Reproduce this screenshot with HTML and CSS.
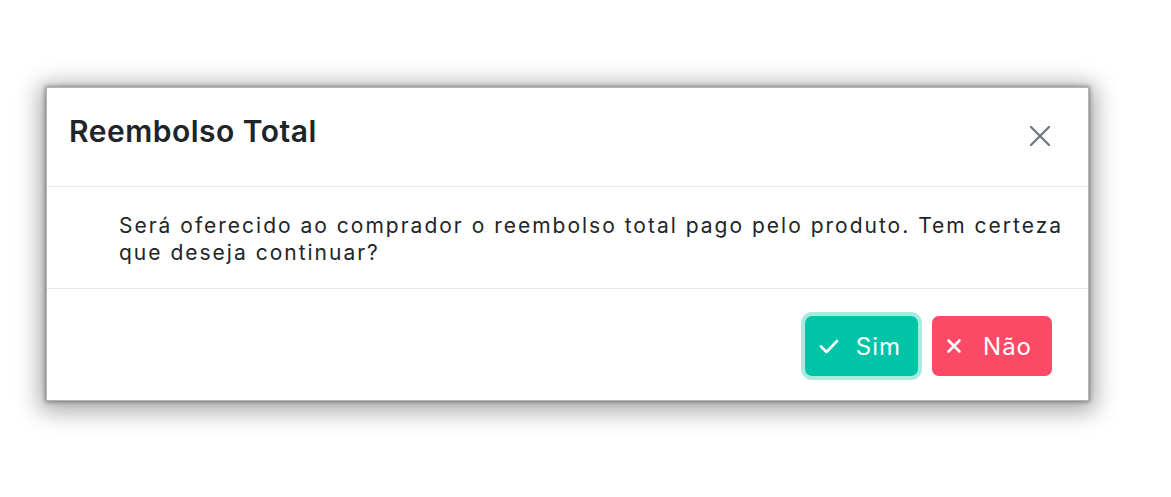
FILE: index.html
```html
<!DOCTYPE html>
<html lang="pt-br">
<head>
    <meta charset="UTF-8">
    <meta name="viewport" content="width=device-width, initial-scale=1.0">
    <title>Reembolso Total</title>
    <link rel="stylesheet" href="styles.css">
</head>
<body>
    <div class="modal">
        <div class="modal-header">
            <h2 class="modal-title">Reembolso Total</h2>
            <button class="btn-close" aria-label="Fechar">
                <svg width="20" height="20" viewBox="0 0 20 20">
                    <path d="M1 1 L19 19 M19 1 L1 19" stroke="#6c757d" stroke-width="2.2" stroke-linecap="round" fill="none"/>
                </svg>
            </button>
        </div>

        <div class="modal-body">
            <p>Será oferecido ao comprador o reembolso total pago pelo produto. Tem certeza que deseja continuar?</p>
        </div>

        <div class="modal-footer">
            <button class="btn btn-sim">
                <svg width="20" height="20" viewBox="0 0 20 20">
                    <path d="M2 10.5 L7.5 16 L18 5" stroke="#fff" stroke-width="2.6" stroke-linecap="round" stroke-linejoin="round" fill="none"/>
                </svg>
                Sim
            </button>
            <button class="btn btn-nao">
                <svg width="16" height="16" viewBox="0 0 16 16">
                    <path d="M2.5 2.5 L13.5 13.5 M13.5 2.5 L2.5 13.5" stroke="#fff" stroke-width="2.6" stroke-linecap="round" fill="none"/>
                </svg>
                Não
            </button>
        </div>
    </div>
</body>
</html>
```

FILE: styles.css
```css
* {
    margin: 0;
    padding: 0;
    box-sizing: border-box;
}

body {
    font-family: 'Inter', 'Noto Sans', sans-serif;
    background-color: #fff;
    color: #212529;
    min-height: 100vh;
    padding: 87px 82px 0 46px;
}

.modal {
    width: 1043px;
    background-color: #fff;
    border: 1px solid #b5b5b5;
    box-shadow: 0 0 4px 1px rgba(0, 0, 0, 0.35), 0 4px 22px 6px rgba(0, 0, 0, 0.35);
}

/* Cabeçalho */
.modal-header {
    display: flex;
    justify-content: space-between;
    align-items: center;
    height: 99px;
    padding: 0 38px 12px 22px;
    border-bottom: 1px solid #e5e8eb;
}

.modal-title {
    font-size: 30px;
    font-weight: 600;
    line-height: 1.2;
    letter-spacing: 0.5px;
    color: #212529;
}

.btn-close {
    background: none;
    border: none;
    width: 20px;
    height: 20px;
    margin-top: 10px;
    display: flex;
    cursor: pointer;
}

/* Corpo */
.modal-body {
    padding: 25px 20px 22px 72px;
    border-bottom: 1px solid #e5e8eb;
}

.modal-body p {
    font-size: 21px;
    line-height: 27px;
    letter-spacing: 2px;
}

/* Rodapé */
.modal-footer {
    display: flex;
    justify-content: flex-end;
    gap: 14px;
    padding: 27px 36px 24px 24px;
}

.btn {
    display: flex;
    align-items: center;
    gap: 17px;
    height: 60px;
    padding: 0 17px 0 14px;
    border: none;
    border-radius: 7px;
    font-family: inherit;
    font-size: 24px;
    letter-spacing: 1px;
    color: #fff;
    cursor: pointer;
}

.btn-sim {
    background-color: #00c4a7;
    box-shadow: 0 0 0 4px #a9ecdf;
}

.btn-nao {
    background-color: #fc4965;
    gap: 21px;
    padding-right: 20px;
}
```
